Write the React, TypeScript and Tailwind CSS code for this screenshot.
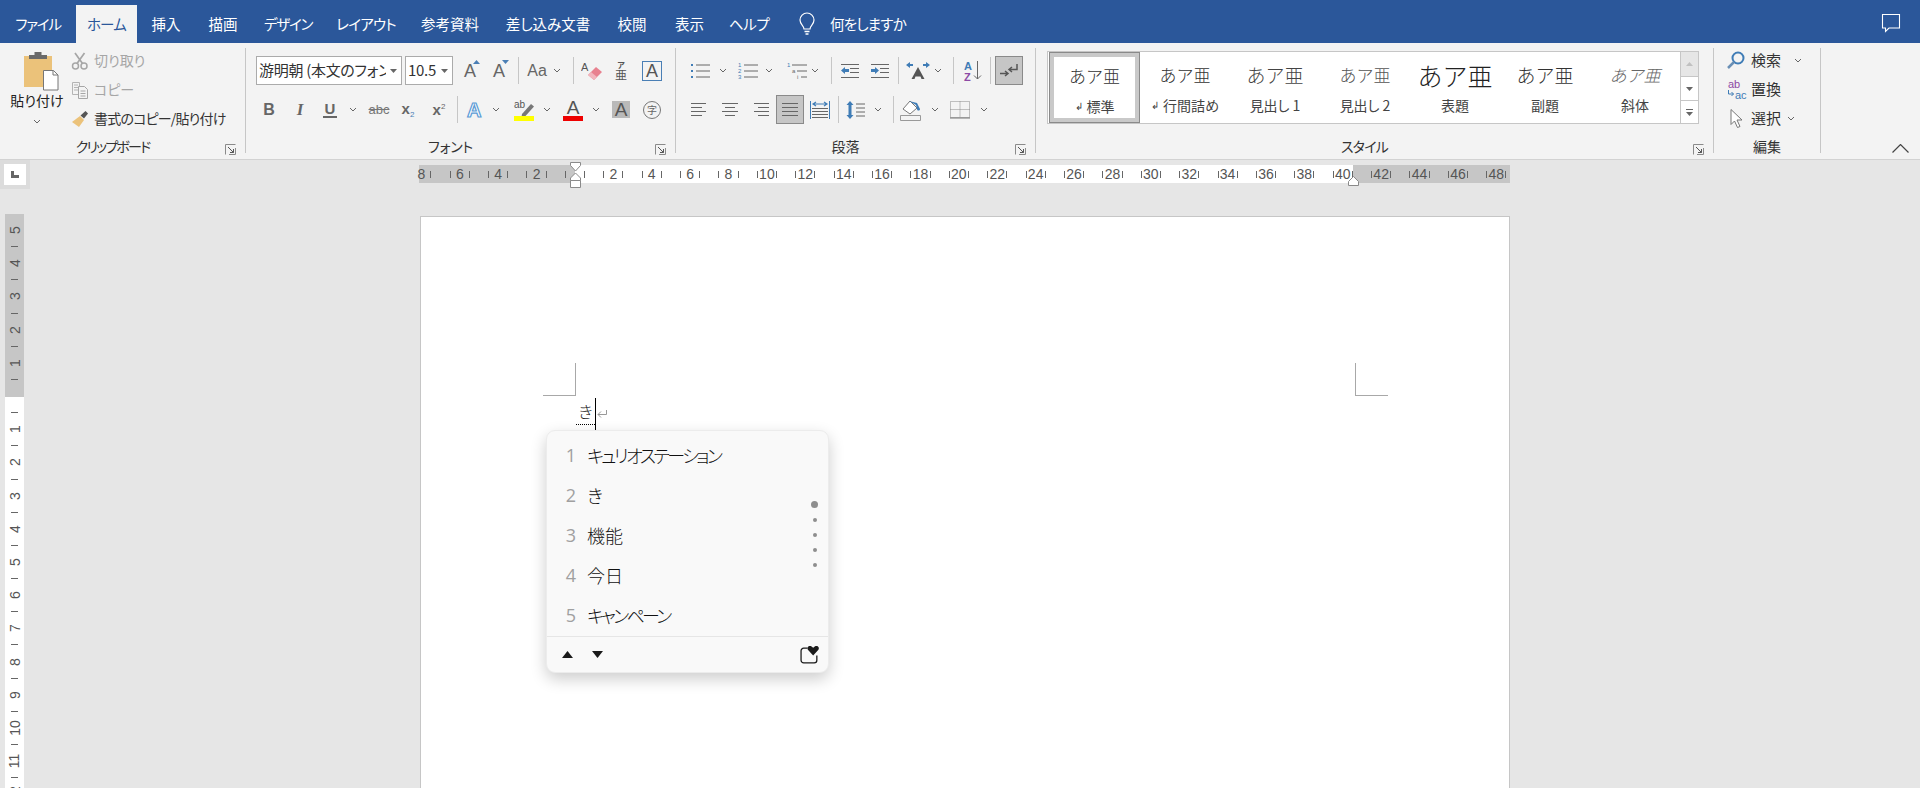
import type { ReactNode } from 'react';

// Word のリボンと IME 候補ウィンドウの再現
const tabs = [
  { label: 'ファイル', w: 'w-[76px] tracking-[-1.2px]' },
  { label: 'ホーム', w: 'w-[61px] tracking-[-0.8px]', active: true },
  { label: '挿入', w: 'w-[58px]' },
  { label: '描画', w: 'w-[56px]' },
  { label: 'デザイン', w: 'w-[74px] tracking-[-1.2px]' },
  { label: 'レイアウト', w: 'w-[82px] tracking-[-0.7px]' },
  { label: '参考資料', w: 'w-[86px]' },
  { label: '差し込み文書', w: 'w-[110px]' },
  { label: '校閲', w: 'w-[58px]' },
  { label: '表示', w: 'w-[57px]' },
  { label: 'ヘルプ', w: 'w-[62px] tracking-[-0.4px]' },
];

const candidates = [
  { text: 'キュリオステーション', cls: 'tracking-[-2.6px]' },
  { text: 'き', cls: '' },
  { text: '機能', cls: '' },
  { text: '今日', cls: '' },
  { text: 'キャンペーン', cls: 'tracking-[-2.7px]' },
];

const rulerMarks = Array.from({ length: 29 }, (_, i) => Math.abs(i * 2 - 8));
const vRulerTop = [5, 4, 3, 2, 1];
const vRulerBottom = [1, 2, 3, 4, 5, 6, 7, 8, 9, 10, 11, 12];

const styles = [
  { sample: 'あア亜', label: '行間詰め', mark: true, cls: 'text-[17px] text-[#333] font-light' },
  { sample: 'あア亜', label: '見出し 1', cls: 'text-[19px] text-[#444] font-light' },
  { sample: 'あア亜', label: '見出し 2', cls: 'text-[17px] text-[#555] font-light' },
  { sample: 'あア亜', label: '表題', cls: 'text-[25px] text-[#222] font-light' },
  { sample: 'あア亜', label: '副題', cls: 'text-[19px] text-[#333] font-light' },
  { sample: 'あア亜', label: '斜体', cls: 'text-[17px] text-[#666] italic font-light' },
];

function Chev({ className = '' }: { className?: string }) {
  return (
    <svg width="8" height="5" viewBox="0 0 8 5" className={`shrink-0 ${className}`}>
      <path d="M1 1l3 3 3-3" fill="none" stroke="#666" strokeWidth="1" />
    </svg>
  );
}

function Sep({ className = '' }: { className?: string }) {
  return <div className={`h-[27px] w-px shrink-0 bg-[#c6c6c6] ${className}`} />;
}

function Launcher() {
  return (
    <svg width="11" height="11" viewBox="0 0 11 11" className="shrink-0">
      <path d="M.5 10.5V.5h10M10.5 4v6.5H4" fill="none" stroke="#8a8a8a" />
      <path d="M3 3l5.5 5.5M8.5 5v3.5H5" fill="none" stroke="#555" />
    </svg>
  );
}

function Group({ label, launcher = true, labelCls = '', className, children }: { label: string; launcher?: boolean; labelCls?: string; className: string; children: ReactNode }) {
  return (
    <div className={`flex h-[105px] shrink-0 flex-col border-r border-[#c6c6c6] ${className}`}>
      <div className="h-[90px]">{children}</div>
      <div className="flex h-[15px] items-center">
        <div className={`flex-1 text-center text-[14px] leading-[22px] text-[#333] ${labelCls}`}>{label}</div>
        {launcher && (
          <div className="flex w-[20px] items-center justify-start pt-[8px]">
            <Launcher />
          </div>
        )}
      </div>
    </div>
  );
}

function Row({ children }: { children: ReactNode }) {
  return <div className="flex h-[29px] items-center">{children}</div>;
}

function Glyph({ className, children }: { className: string; children: ReactNode }) {
  return <span className={`shrink-0 text-center font-['Liberation_Sans',sans-serif] leading-none ${className}`}>{children}</span>;
}

function Combo({ className, text }: { className: string; text: string }) {
  return (
    <div className={`flex h-[29px] shrink-0 items-center overflow-hidden border border-[#ababab] bg-white pl-[2px] ${className}`}>
      <span className="flex-1 overflow-hidden whitespace-nowrap text-[15px] tracking-[-0.3px] text-[#333]">{text}</span>
      <svg width="7" height="4" viewBox="0 0 7 4" className="mx-[4px] shrink-0">
        <path d="M0 0h7L3.5 4z" fill="#666" />
      </svg>
    </div>
  );
}

function Lines({ rows, className = '' }: { rows: number[][]; className?: string }) {
  return (
    <svg width="20" height="16" viewBox="0 0 20 16" className={`shrink-0 ${className}`}>
      {rows.map((r, i) => (
        <path key={i} d={`M${r[0]} ${1.5 + i * 4}H${r[1]}`} stroke="#666" />
      ))}
    </svg>
  );
}

function Clipboard() {
  return (
    <div className="flex h-[90px]">
      <div className="flex w-[74px] shrink-0 flex-col items-center">
        <svg width="36" height="40" viewBox="0 0 36 40" className="ml-[10px] mt-[3px] shrink-0">
          <path d="M0 5h28v31H0z" fill="#ebc27a" />
          <path d="M5 8V4h5.500V1h7v3H23v4z" fill="#6a6a6a" />
          <path d="M19.500 19.500h10l4.500 4.500v15H19.500z" fill="#fff" stroke="#777" />
          <path d="M29 19.500V24h5" fill="none" stroke="#777" />
        </svg>
        <span className="-mt-[1px] text-[14px] leading-[20px] text-[#222]">貼り付け</span>
        <Chev className="mt-[9px]" />
      </div>
      <div className="-ml-[3px] -mt-[2px] flex flex-col">
        <div className="flex h-[29px] items-center">
          <svg width="18" height="18" viewBox="0 0 18 18" className="shrink-0">
            <circle cx="4.500" cy="14" r="3" fill="none" stroke="#a6a6a6" strokeWidth="1.500" />
            <circle cx="13" cy="14" r="3" fill="none" stroke="#a6a6a6" strokeWidth="1.500" />
            <path d="M6 11.500L13.500 1M11.500 11.500L4 1" stroke="#a6a6a6" strokeWidth="1.700" />
          </svg>
          <span className="ml-[5px] text-[14px] text-[#a6a6a6]">切り取り</span>
        </div>
        <div className="flex h-[29px] items-center">
          <svg width="18" height="18" viewBox="0 0 18 18" className="shrink-0">
            <path d="M1.500 1.500h7v12h-7zM3 4h4M3 6.500h4M3 9h4" fill="none" stroke="#b4b4b4" />
            <path d="M7.500 5.500h6l3 3v9h-9z" fill="#f3f3f3" stroke="#a6a6a6" />
            <path d="M9.500 10h5M9.500 12.500h5M9.500 15h5" stroke="#a6a6a6" />
          </svg>
          <span className="ml-[5px] text-[14px] text-[#a6a6a6]">コピー</span>
        </div>
        <div className="flex h-[29px] items-center">
          <svg width="18" height="18" viewBox="0 0 18 18" className="shrink-0">
            <path d="M1 12l8-6 4 4-5 7z" fill="#ebc27a" />
            <path d="M9.500 5.500l5-4.500 2.500 2.500-4 5z" fill="#555" />
          </svg>
          <span className="ml-[5px] whitespace-nowrap text-[14px] tracking-[-0.8px] text-[#333]">書式のコピー/貼り付け</span>
        </div>
      </div>
    </div>
  );
}

function FontGroup() {
  return (
    <div className="flex flex-col gap-[10px] pl-[10px] pt-[8px]">
      <Row>
        <Combo className="w-[146px]" text="游明朝 (本文のフォント)" />
        <Combo className="ml-[3px] w-[48px]" text="10.5" />
        <Glyph className="relative ml-[7px] w-[20px] text-[18px] text-[#666]">
          A
          <svg width="7" height="4" viewBox="0 0 7 4" className="absolute right-0 top-[-2px]">
            <path d="M3.500 0L7 4H0z" fill="#4a7fb5" />
          </svg>
        </Glyph>
        <Glyph className="relative ml-[9px] w-[20px] text-[18px] text-[#666]">
          A
          <svg width="7" height="4" viewBox="0 0 7 4" className="absolute right-0 top-[-2px]">
            <path d="M0 0h7L3.500 4z" fill="#4a7fb5" />
          </svg>
        </Glyph>
        <Sep className="ml-[9px]" />
        <Glyph className="ml-[7px] w-[22px] text-[16px] text-[#666]">Aa</Glyph>
        <Chev className="ml-[5px]" />
        <Sep className="ml-[12px]" />
        <svg width="22" height="20" viewBox="0 0 22 20" className="ml-[7px] shrink-0">
          <text x="0" y="10" fontSize="11" fill="#555" fontFamily="Liberation Sans">A</text>
          <path d="M7 14l8-8 6 5-8 8z" fill="#e8818f" />
          <path d="M7 14l3-3 6 5-3 3z" fill="#f2b5bd" />
        </svg>
        <span className="ml-[10px] flex w-[16px] shrink-0 flex-col items-center leading-none text-[#555]">
          <span className="text-[8px] font-bold">ア</span>
          <span className="text-[12px]">亜</span>
        </span>
        <Glyph className="ml-[13px] flex h-[20px] w-[20px] items-center justify-center border border-[#4a7fb5] text-[18px] text-[#555]">A</Glyph>
      </Row>
      <Row>
        <Glyph className="ml-[6px] w-[14px] text-[16px] font-bold text-[#666]">B</Glyph>
        <Glyph className="ml-[17px] w-[14px] font-['Liberation_Serif',serif] text-[17px] font-bold italic text-[#666]">I</Glyph>
        <Glyph className="ml-[16px] w-[14px] border-b-[2px] border-[#666] text-[15px] font-bold text-[#666]">U</Glyph>
        <Chev className="ml-[12px]" />
        <Glyph className="ml-[11px] w-[22px] text-[13px] text-[#777] line-through">abc</Glyph>
        <Glyph className="ml-[8px] w-[20px] text-[15px] font-bold text-[#666]">
          x<span className="align-[-3px] text-[8px] font-normal text-[#4a7fb5]">2</span>
        </Glyph>
        <Glyph className="ml-[11px] w-[20px] text-[15px] font-bold text-[#666]">
          x<span className="align-[6px] text-[8px] font-normal text-[#666]">2</span>
        </Glyph>
        <Sep className="ml-[8px]" />
        <svg width="22" height="22" viewBox="0 0 22 22" className="ml-[6px] shrink-0">
          <text x="3" y="18" fontSize="20" fontWeight="bold" fill="#fff" stroke="#5b9bd5" strokeWidth="1.200" fontFamily="Liberation Sans">A</text>
        </svg>
        <Chev className="ml-[6px]" />
        <svg width="22" height="22" viewBox="0 0 22 22" className="ml-[13px] shrink-0">
          <text x="1" y="9" fontSize="10" fill="#555" fontFamily="Liberation Sans">ab</text>
          <path d="M9 15l9-10 3 2.500-8.500 9.500-4 1z" fill="#777" />
          <path d="M1 17h20v5H1z" fill="#ffff00" />
        </svg>
        <Chev className="ml-[8px]" />
        <span className="ml-[12px] flex w-[20px] shrink-0 flex-col items-center">
          <span className="font-['Liberation_Sans',sans-serif] text-[19px] leading-[17px] text-[#555]">A</span>
          <span className="h-[5px] w-[20px] bg-[#ee0000]" />
        </span>
        <Chev className="ml-[9px]" />
        <Glyph className="ml-[12px] flex h-[17px] w-[18px] items-center justify-center bg-[#b9b9b9] text-[19px] text-[#555]">A</Glyph>
        <span className="ml-[13px] flex h-[18px] w-[18px] shrink-0 items-center justify-center rounded-full border border-[#777] text-[10px] leading-none text-[#666]">字</span>
      </Row>
    </div>
  );
}

function ParagraphGroup() {
  return (
    <div className="flex flex-col gap-[10px] pt-[8px]">
      <Row>
        <svg width="22" height="18" viewBox="0 0 22 18" className="ml-[13px] shrink-0">
          <path d="M2 2h2v2H2zM2 8h2v2H2zM2 14h2v2H2z" fill="#3f7cb6" />
          <path d="M7 3h14M7 9h14M7 15h14" stroke="#666" />
        </svg>
        <Chev className="ml-[8px]" />
        <svg width="22" height="18" viewBox="0 0 22 18" className="ml-[10px] shrink-0">
          <g fontSize="6" fill="#3f7cb6" fontFamily="Liberation Sans">
            <text x="1" y="5">1</text>
            <text x="1" y="11">2</text>
            <text x="1" y="17">3</text>
          </g>
          <path d="M7 3h14M7 9h14M7 15h14" stroke="#666" />
        </svg>
        <Chev className="ml-[6px]" />
        <svg width="22" height="18" viewBox="0 0 22 18" className="ml-[14px] shrink-0">
          <g fontSize="6" fill="#3f7cb6" fontFamily="Liberation Sans">
            <text x="0" y="5">1</text>
            <text x="5" y="11" fill="#666">a</text>
            <text x="10" y="17" fill="#666">i</text>
          </g>
          <path d="M5 3h15M10 9h10M14 15h6" stroke="#666" />
        </svg>
        <Chev className="ml-[2px]" />
        <Sep className="ml-[12px]" />
        <svg width="20" height="16" viewBox="0 0 20 16" className="ml-[8px] shrink-0">
          <path d="M1 1.500h18M10 5.500h9M10 9.500h9M1 14.500h18" stroke="#666" />
          <path d="M1 7.500l4-3.500v2h4v3H5v2z" fill="#3f7cb6" />
        </svg>
        <svg width="20" height="16" viewBox="0 0 20 16" className="ml-[10px] shrink-0">
          <path d="M1 1.500h18M10 5.500h9M10 9.500h9M1 14.500h18" stroke="#666" />
          <path d="M9 7.500l-4-3.500v2H1v3h4v2z" fill="#3f7cb6" />
        </svg>
        <Sep className="ml-[8px]" />
        <svg width="26" height="20" viewBox="0 0 26 20" className="ml-[6px] shrink-0">
          <path d="M1 4l4-3v2h3v2H5v2zM25 4l-4-3v2h-3v2h3v2z" fill="#3f7cb6" />
          <path d="M13 6l6.500 12h-3l-1-2.500h-5l-1 2.500h-3z" fill="#555" />
        </svg>
        <Chev className="ml-[3px]" />
        <Sep className="ml-[11px]" />
        <svg width="20" height="22" viewBox="0 0 20 22" className="ml-[9px] shrink-0">
          <text x="1" y="10" fontSize="11" fontWeight="bold" fill="#3f7cb6" fontFamily="Liberation Sans">A</text>
          <text x="1" y="21" fontSize="11" fontWeight="bold" fill="#8d4aa5" fontFamily="Liberation Sans">Z</text>
          <path d="M14.500 1v18M11 15.500l3.500 3.500 3.500-3.500" fill="none" stroke="#666" />
        </svg>
        <Sep className="ml-[7px]" />
        <div className="ml-[4px] flex h-[29px] w-[28px] shrink-0 items-center justify-center border border-[#8a8a8a] bg-[#c6c6c6]">
          <svg width="20" height="16" viewBox="0 0 20 16">
            <path d="M18 1v5.500h-7M13 4l-3 2.500L13 9" fill="none" stroke="#555" strokeWidth="1.500" />
            <path d="M1 10.500h7M6 8l3 2.500L6 13" fill="none" stroke="#555" strokeWidth="1.500" />
          </svg>
        </div>
      </Row>
      <Row>
        <Lines className="ml-[14px]" rows={[[1, 16], [1, 12], [1, 16], [1, 12]]} />
        <Lines className="ml-[10px]" rows={[[2, 18], [5, 15], [2, 18], [5, 15]]} />
        <Lines className="ml-[10px]" rows={[[4, 19], [8, 19], [4, 19], [8, 19]]} />
        <div className="ml-[6px] flex h-[29px] w-[28px] shrink-0 items-center justify-center border border-[#8a8a8a] bg-[#c6c6c6]">
          <Lines rows={[[2, 18], [2, 18], [2, 18], [2, 18]]} />
        </div>
        <svg width="20" height="18" viewBox="0 0 20 18" className="ml-[6px] shrink-0">
          <path d="M.5 0v18M19.500 0v18" stroke="#3f7cb6" />
          <path d="M3 3h14M6 1l-3 2 3 2M14 1l3 2-3 2" fill="none" stroke="#3f7cb6" strokeWidth="1.200" />
          <path d="M2 7.500h16M2 10.500h16M2 13.500h16M2 16.500h16" stroke="#666" />
        </svg>
        <Sep className="ml-[8px]" />
        <svg width="20" height="18" viewBox="0 0 20 18" className="ml-[7px] shrink-0">
          <path d="M4 0l3.500 4H5.500v10h2L4 18 .5 14h2V4h-2z" fill="#3f7cb6" />
          <path d="M10 3h9M10 7h9M10 11h9M10 15h9" stroke="#666" />
        </svg>
        <Chev className="ml-[8px]" />
        <Sep className="ml-[11px]" />
        <svg width="22" height="22" viewBox="0 0 22 22" className="ml-[6px] shrink-0">
          <path d="M3 10l7-8 7 7-7 6z" fill="#fff" stroke="#777" />
          <path d="M9 2l8 2 3 6c0 2-3 2-3 0l-1-4z" fill="#3f7cb6" />
          <path d="M.5 16.500h20v5H.5z" fill="#f3f3f3" stroke="#999" />
        </svg>
        <Chev className="ml-[9px]" />
        <svg width="20" height="18" viewBox="0 0 20 18" className="ml-[11px] shrink-0">
          <path d="M.5.500h19v16H.5zM10 .5v16M.5 8.500h19" fill="none" stroke="#888" strokeDasharray="1 1" />
          <path d="M0 17h20" stroke="#777" />
        </svg>
        <Chev className="ml-[10px]" />
      </Row>
    </div>
  );
}

function StyleGallery() {
  return (
    <div className="ml-[11px] mt-[3px] flex h-[73px] w-[652px] border border-[#c6c6c6] bg-white">
      <div className="ml-px flex h-[71px] w-[91px] shrink-0 border border-[#8a8a8a]">
        <div className="flex flex-1 flex-col items-center border-[4px] border-[#c9c9c9] [font-feature-settings:normal]">
          <span className="mt-[1px] h-[36px] text-[17px] font-light leading-[36px] text-[#333]">あア亜</span>
          <span className="flex items-center text-[14px] leading-[24px] text-[#444]">
            <span className="mr-[4px] text-[10px]">↲</span>標準
          </span>
        </div>
      </div>
      {styles.map((s) => (
        <div key={s.label} className="flex w-[90px] shrink-0 flex-col items-center">
          <span className={`mt-[5px] h-[36px] leading-[36px] [font-feature-settings:normal] ${s.cls}`}>{s.sample}</span>
          <span className="flex items-center text-[14px] leading-[24px] text-[#444]">
            {s.mark && <span className="mr-[4px] text-[10px]">↲</span>}
            {s.label}
          </span>
        </div>
      ))}
      <div className="ml-auto flex w-[18px] shrink-0 flex-col border-l border-[#c6c6c6]">
        <div className="flex h-[25px] items-center justify-center border-b border-[#c6c6c6] bg-[#e6e6e6]">
          <svg width="7" height="4" viewBox="0 0 7 4"><path d="M3.500 0L7 4H0z" fill="#c0c0c0" /></svg>
        </div>
        <div className="flex h-[24px] items-center justify-center border-b border-[#c6c6c6]">
          <svg width="7" height="4" viewBox="0 0 7 4"><path d="M0 0h7L3.500 4z" fill="#666" /></svg>
        </div>
        <div className="flex flex-1 flex-col items-center justify-center gap-[2px]">
          <span className="h-px w-[7px] bg-[#666]" />
          <svg width="7" height="4" viewBox="0 0 7 4"><path d="M0 0h7L3.500 4z" fill="#666" /></svg>
        </div>
      </div>
    </div>
  );
}

function EditingGroup() {
  return (
    <div className="-mt-[2px] flex flex-col pl-[13px]">
      <div className="flex h-[28px] items-center">
        <svg width="18" height="19" viewBox="0 0 18 19" className="shrink-0">
          <circle cx="11" cy="7" r="5.500" fill="none" stroke="#3f7cb6" strokeWidth="2" />
          <path d="M7 11l-6 6" stroke="#6a8fb5" strokeWidth="2.500" />
        </svg>
        <span className="ml-[6px] text-[15px] text-[#333]">検索</span>
        <Chev className="ml-[13px]" />
      </div>
      <div className="flex h-[30px] items-center">
        <svg width="21" height="21" viewBox="0 0 21 21" className="shrink-0">
          <text x="1" y="9" fontSize="11" fill="#8d4aa5" fontFamily="Liberation Sans">ab</text>
          <text x="8" y="20" fontSize="11" fill="#3f7cb6" fontFamily="Liberation Sans">ac</text>
          <path d="M1.500 11v4h5M4.500 13l2 2-2 2" fill="none" stroke="#3f7cb6" />
        </svg>
        <span className="ml-[3px] text-[15px] text-[#333]">置換</span>
      </div>
      <div className="flex h-[28px] items-center">
        <svg width="16" height="21" viewBox="0 0 16 21" className="ml-[2px] shrink-0">
          <path d="M2 1.500v15l3.500-3.500 3 6.500 2.500-1-3-6.500h5z" fill="#fff" stroke="#777" />
        </svg>
        <span className="ml-[6px] text-[15px] text-[#333]">選択</span>
        <Chev className="ml-[6px]" />
      </div>
    </div>
  );
}

function HRuler() {
  return (
    <div className="relative ml-[389px] mt-[5px] h-[18px] w-[1091px]">
      <div className="flex h-full bg-[linear-gradient(to_right,#c6c6c6_156px,#fff_156px,#fff_934px,#c6c6c6_934px)] font-['Liberation_Sans',sans-serif] text-[14px] leading-none text-[#555]">
        {rulerMarks.map((n, i) => (
          <div key={i} className="flex h-full w-[38.400px] shrink-0 items-center justify-center first:-ml-[16.800px]">
            <span className={`h-[7px] w-px shrink-0 bg-[#666] ${i === 0 ? 'invisible' : ''}`} />
            <span className="w-[18.200px] shrink-0 text-center">{n === 0 ? '' : n}</span>
            <span className="h-[7px] w-px shrink-0 bg-[#666]" />
          </div>
        ))}
      </div>
      <svg width="13" height="30" viewBox="0 0 13 30" className="absolute left-[150px] top-[-3px]">
        <path d="M1.500.500h10v3L6.500 9 1.500 3.500z" fill="#fff" stroke="#8a8a8a" />
        <path d="M6.500 11l5 5v2.500h-10V16z" fill="#fff" stroke="#8a8a8a" />
        <path d="M1.500 18.500h10v7h-10z" fill="#fff" stroke="#8a8a8a" />
      </svg>
      <svg width="13" height="10" viewBox="0 0 13 10" className="absolute left-[928px] top-[11px]">
        <path d="M6.500.500l5 5v4h-10v-4z" fill="#fff" stroke="#8a8a8a" />
      </svg>
    </div>
  );
}

function VRuler() {
  return (
    <div className="ml-[5px] flex h-full w-[19px] shrink-0 flex-col overflow-hidden bg-[linear-gradient(to_bottom,#c6c6c6_183px,#fff_183px)] font-['Liberation_Sans',sans-serif] text-[14px] leading-none text-[#555]">
      {vRulerTop.map((n) => (
        <VCell key={`t${n}`} n={n} />
      ))}
      <div className="flex h-[33.200px] shrink-0 flex-col items-center justify-end">
        <span className="h-px w-[7px] bg-[#666]" />
      </div>
      {vRulerBottom.map((n) => (
        <VCell key={`b${n}`} n={n} />
      ))}
    </div>
  );
}

function VCell({ n }: { n: number }) {
  return (
    <div className="flex h-[33.200px] shrink-0 flex-col items-center">
      <span className="flex flex-1 items-center justify-center">
        <span className="-rotate-90">{n}</span>
      </span>
      <span className="h-px w-[7px] shrink-0 bg-[#666]" />
    </div>
  );
}

function CandidateWindow() {
  return (
    <div className="absolute left-[125px] top-[213px] flex h-[243px] w-[283px] flex-col rounded-[9px] border border-[#ececec] bg-[#f9f9f9] pt-[5px] shadow-[0_6px_16px_rgba(0,0,0,0.2)]">
      {candidates.map((c, i) => (
        <div key={c.text} className="flex h-[40px] shrink-0 items-center pb-[2px]">
          <span className="ml-[13px] w-[22px] text-center font-['Open_Sans',sans-serif] text-[18px] text-[#a0a0a0]">{i + 1}</span>
          <span className={`ml-[5px] text-[18px] font-light text-[#111] ${c.cls}`}>{c.text}</span>
        </div>
      ))}
      <div className="absolute right-[9.500px] top-[70px] flex w-[8px] flex-col items-center gap-[11px]">
        <span className="-mb-[1px] h-[7px] w-[7px] rounded-full bg-[#8e8e8e]" />
        <span className="h-[4px] w-[4px] rounded-full bg-[#8e8e8e]" />
        <span className="h-[4px] w-[4px] rounded-full bg-[#8e8e8e]" />
        <span className="h-[4px] w-[4px] rounded-full bg-[#8e8e8e]" />
        <span className="h-[4px] w-[4px] rounded-full bg-[#8e8e8e]" />
      </div>
      <div className="flex flex-1 items-center border-t border-[#e6e6e6]">
        <svg width="11" height="7" viewBox="0 0 11 7" className="ml-[15px]">
          <path d="M5.500 0L11 7H0z" fill="#1a1a1a" />
        </svg>
        <svg width="11" height="7" viewBox="0 0 11 7" className="ml-[19px]">
          <path d="M0 0h11L5.500 7z" fill="#1a1a1a" />
        </svg>
        <svg width="20" height="20" viewBox="0 0 19 19" className="ml-auto mr-[8px]">
          <path d="M7 3H3.500A2.500 2.500 0 0 0 1 5.500v9A2.500 2.500 0 0 0 3.500 17h10a2.500 2.500 0 0 0 2.500-2.500V10" fill="none" stroke="#1a1a1a" strokeWidth="1.200" />
          <path d="M12.500 10L7.500 4.500C6 2.500 8.500 0 11 1.500L12.500 2.500 14 1.500C16.500 0 19 2.500 17.500 4.500z" fill="#1a1a1a" />
        </svg>
      </div>
    </div>
  );
}

export default function App() {
  return (
    <div className="flex h-[788px] w-[1920px] flex-col overflow-hidden bg-[#e6e6e6] font-['Noto_Sans_CJK_JP',sans-serif] [font-feature-settings:'palt']">
      {/* タイトルバー */}
      <div className="flex h-[43px] shrink-0 items-end bg-[#2b579a] text-[14.500px] text-white">
        {tabs.map((t) => (
          <div
            key={t.label}
            className={`flex h-[38px] shrink-0 items-center justify-center ${t.w} ${t.active ? 'bg-[#f3f3f3] text-[#2b579a]' : ''}`}
          >
            {t.label}
          </div>
        ))}
        <svg width="18" height="24" viewBox="0 0 18 24" className="mb-[7px] ml-[18px] shrink-0">
          <path d="M6 17c0-3-4-4.500-4-9a7 7 0 0 1 14 0c0 4.500-4 6-4 9z" fill="none" stroke="#fff" strokeWidth="1.200" />
          <path d="M6.500 19.500h5M7.500 22h3" stroke="#fff" strokeWidth="1.500" />
        </svg>
        <span className="ml-[14px] flex h-[38px] items-center tracking-[-0.8px]">何をしますか</span>
        <svg width="20" height="20" viewBox="0 0 20 20" className="mb-[10px] ml-auto mr-[19px] shrink-0">
          <path d="M1.500 1.500h17v13.500H8L4.500 18.500V15h-3z" fill="none" stroke="#fff" strokeWidth="1.100" />
        </svg>
      </div>

      {/* リボン */}
      <div className="flex h-[117px] shrink-0 border-b border-[#d2d2d2] bg-[#f3f3f3] pt-[5px]">
        <Group label="クリップボード" labelCls="tracking-[-1.8px]" className="w-[246px]">
          <Clipboard />
        </Group>
        <Group label="フォント" labelCls="tracking-[-0.3px]" className="w-[430px]">
          <FontGroup />
        </Group>
        <Group label="段落" className="w-[360px]">
          <ParagraphGroup />
        </Group>
        <Group label="スタイル" labelCls="tracking-[-0.8px]" className="w-[678px]">
          <StyleGallery />
        </Group>
        <Group label="編集" launcher={false} className="w-[107px]">
          <EditingGroup />
        </Group>
        <div className="flex flex-1 items-end justify-end pb-[6px] pr-[11px]">
          <svg width="17" height="9" viewBox="0 0 17 9">
            <path d="M.5 8.500l8-8 8 8" fill="none" stroke="#444" strokeWidth="1.200" />
          </svg>
        </div>
      </div>

      {/* ルーラー */}
      <div className="flex h-[54px] shrink-0 items-start">
        <div className="flex h-[29px] w-[30px] shrink-0 items-center justify-center bg-[#dcdcdc]">
          <div className="flex h-[21px] w-[22px] items-center justify-center bg-white">
            <svg width="8" height="7" viewBox="0 0 8 7"><path d="M0 0h3v4h5v3H0z" fill="#666" /></svg>
          </div>
        </div>
        <HRuler />
      </div>

      {/* 本文 */}
      <div className="flex min-h-0 flex-1">
        <VRuler />
        <div className="relative ml-[396px] mt-[2px] h-[600px] w-[1090px] shrink-0 border border-[#c6c6c6] bg-white">
          <div className="flex justify-between pl-[122px] pr-[121px] pt-[146px]">
            <div className="h-[33px] w-[33px] border-b border-r border-[#a8a8a8]" />
            <div className="h-[33px] w-[33px] border-b border-l border-[#a8a8a8]" />
          </div>
          <div className="ml-[155px] mt-[2px] flex h-[32px] items-start">
            <span className="h-[27px] w-[19px] border-b border-dotted border-black text-center text-[16px] font-light leading-[26px] text-[#222]">き</span>
            <span className="h-[32px] w-px bg-black" />
            <svg width="10" height="9" viewBox="0 0 10 9" className="ml-px mt-[12px]">
              <path d="M9.500 0v4.500H1M4 1.500L1 4.500l3 3" fill="none" stroke="#999" />
            </svg>
          </div>
          <CandidateWindow />
        </div>
      </div>
    </div>
  );
}
